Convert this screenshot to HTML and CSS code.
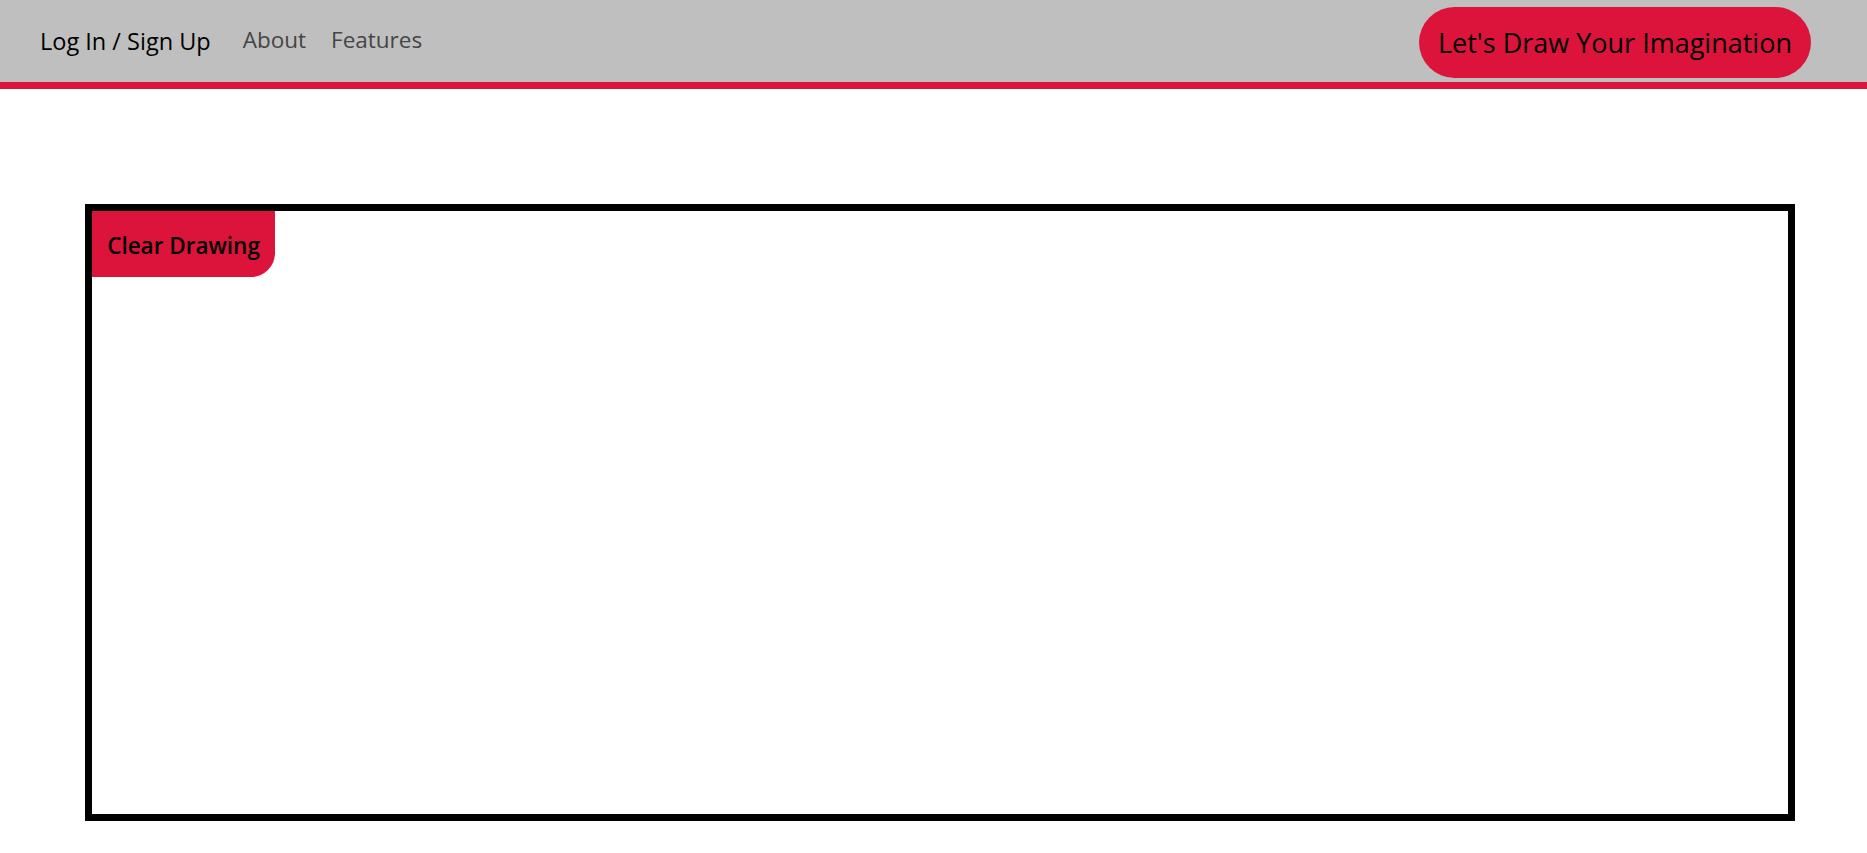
FILE: index.html
```html
<!DOCTYPE html>
<html lang="en">

<head>
    <meta name="viewport" content="width=device-width, initial-scale=1.0">
    <link rel="stylesheet" href="styles.css">
    <title>Draw</title>
</head>

<body>
    <header>
        <span class="login"><a href="#">Log In / Sign Up</a></span>
        <span class="link"><a href="#">About</a></span>
        <span class="link"><a href="#">Features</a></span>
        <button class="draw-btn">Let's Draw Your Imagination</button>
    </header>

    <div id="board">
        <button id="clearBtn">Clear Drawing</button>
    </div>
</body>

</html>
```
FILE: styles.css
```css
body {
    font-family: "Open Sans", sans-serif;
    margin: 0;
    padding: 0;
}

header {
    display: flex;
    align-items: center;
    height: 82px;
    padding-left: 40px;
    background-color: #bfbfbf;
    border-bottom: 7px solid #dc143c;
}

a {
    text-decoration: none;
}

.login {
    margin-right: 32px;
}

.login a {
    font-size: 23.5px;
    color: black;
}

.link {
    margin-right: 25px;
}

.link a {
    font-size: 22.5px;
    color: #454545;
    position: relative;
    top: -2px;
}

.draw-btn {
    margin-left: auto;
    margin-right: 56px;
    height: 71px;
    padding: 0 19px;
    border: none;
    border-radius: 36px;
    background-color: #dc143c;
    color: black;
    font-family: "Open Sans", sans-serif;
    font-size: 27px;
    position: relative;
    top: 1px;
}

#board {
    box-sizing: border-box;
    height: 617px;
    margin: 115px 72px 0 85px;
    border: 7px solid black;
}

#clearBtn {
    display: block;
    width: 183px;
    height: 66px;
    border: none;
    border-bottom-right-radius: 24px;
    background-color: #dc143c;
    color: black;
    font-family: "Open Sans", sans-serif;
    font-size: 22.5px;
    font-weight: 600;
    padding: 2px 0 0;
}
```
